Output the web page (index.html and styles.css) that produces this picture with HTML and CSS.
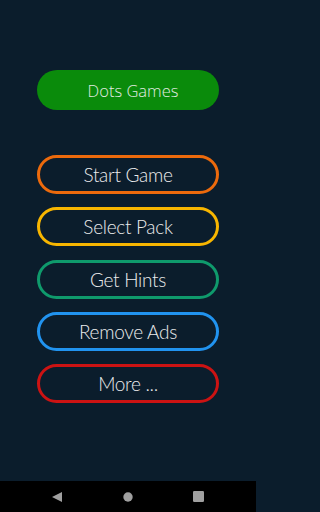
FILE: index.html
```html
<!DOCTYPE html>
<html>
<head>
<meta charset="utf-8">
<link rel="stylesheet" href="styles.css">
</head>
<body>
<div class="screen">
  <main class="content">
    <div class="title">Dots Games</div>
    <nav class="menu">
      <div class="btn orange">Start Game</div>
      <div class="btn yellow">Select Pack</div>
      <div class="btn teal">Get Hints</div>
      <div class="btn blue">Remove Ads</div>
      <div class="btn red">More ...</div>
    </nav>
  </main>
  <footer class="navbar">
    <svg class="nav-icon" width="10" height="10" viewBox="0 0 10 10"><polygon points="10,0 10,10 0,5" fill="#a0a0a0"/></svg>
    <svg class="nav-icon" width="10" height="10" viewBox="0 0 10 10"><circle cx="5" cy="5" r="4.7" fill="#a0a0a0"/></svg>
    <svg class="nav-icon" width="11" height="11" viewBox="0 0 11 11"><rect x="0" y="0" width="11" height="11" rx="1.2" fill="#a0a0a0"/></svg>
  </footer>
</div>
</body>
</html>
```
FILE: styles.css
```css
html, body {
  margin: 0;
  padding: 0;
}
body {
  background: #0b1d2c;
  font-family: "Lato", "Open Sans", sans-serif;
}
.screen {
  width: 256px;
  height: 512px;
  display: flex;
  flex-direction: column;
}
.content {
  flex: 1;
  display: flex;
  flex-direction: column;
  align-items: center;
  padding-top: 70px;
  box-sizing: border-box;
}
.title {
  width: 182px;
  height: 40px;
  box-sizing: border-box;
  padding-left: 10px;
  border-radius: 20px;
  background: #0a8b0b;
  color: #e2ece2;
  font-family: "Open Sans", sans-serif;
  font-weight: 300;
  font-size: 16.5px;
  display: flex;
  align-items: center;
  justify-content: center;
}
.menu {
  margin-top: 45px;
  display: flex;
  flex-direction: column;
  gap: 13.25px;
}
.btn {
  width: 182px;
  height: 39px;
  box-sizing: border-box;
  border: 3px solid;
  border-radius: 20px;
  color: #ececec;
  font-weight: 300;
  font-size: 19px;
  display: flex;
  align-items: center;
  justify-content: center;
  letter-spacing: -0.3px;
}
.orange { border-color: #ec6a0c; }
.yellow { border-color: #f8b600; }
.teal { border-color: #0f9a6c; }
.blue { border-color: #2193ef; }
.red { border-color: #cc1313; }
.navbar {
  height: 31px;
  background: #000;
  display: flex;
  align-items: center;
  justify-content: space-between;
  padding: 0 52px;
}
.nav-icon { display: block; }
```
